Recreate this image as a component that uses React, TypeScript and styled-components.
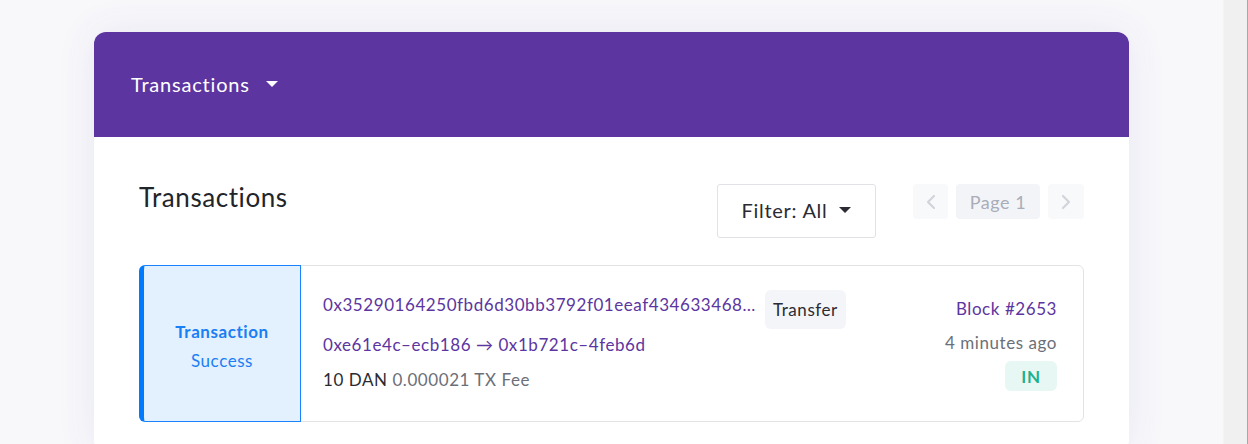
import React from "react";
import styled, { createGlobalStyle } from "styled-components";

const Global = createGlobalStyle`
  html, body { margin: 0; padding: 0; height: 100%; }
  body {
    background: #f8f8fb;
    font-family: "Lato", "Noto Sans", sans-serif;
    letter-spacing: 0.035em;
    overflow: hidden;
  }
  #root { height: 444px; }
`;

const Page = styled.div`
  display: flex;
  height: 444px;
  width: 1248px;
`;

const Main = styled.div`
  flex: 1;
  padding: 32px 0 0 94px;
  background: #f8f8fb;
`;

const ScrollTrack = styled.div`
  background: #f0f0f0;
  border-left: 1px solid #f4f4f6;
  border-right: 1px solid #a8a8a8;
  box-sizing: border-box;
  width: 25px;
`;

const Card = styled.div`
  width: 1035px;
  border-radius: 12px;
  background: #fff;
  box-shadow: 0 0 40px rgba(70, 50, 150, 0.09);
  height: 420px;
`;

const Header = styled.div`
  height: 105px;
  background: #5c35a0;
  border-radius: 12px 12px 0 0;
  display: flex;
  align-items: center;
  padding-left: 37px;
  padding-bottom: 2px;
  box-sizing: border-box;
  gap: 16px;
  color: #fff;
  font-size: 20px;
  letter-spacing: 0.04em;
`;

const Caret = styled.span<{ $color: string }>`
  width: 0;
  height: 0;
  border-left: 6px solid transparent;
  border-right: 6px solid transparent;
  border-top: 6px solid ${(p) => p.$color};
  display: inline-block;
`;

const Body = styled.div`
  padding: 45px 45px 0 45px;
`;

const TopRow = styled.div`
  display: flex;
  align-items: flex-start;
`;

const Title = styled.h2`
  margin: 0;
  font-weight: 400;
  font-size: 26px;
  color: #212529;
  flex: 1;
  line-height: 30px;
`;

const FilterBtn = styled.button`
  height: 54px;
  width: 159px;
  margin-top: 2px;
  background: #fff;
  border: 1px solid #e2e2e6;
  border-radius: 3px;
  display: flex;
  align-items: center;
  justify-content: center;
  gap: 12px;
  font-family: inherit;
  letter-spacing: 0.035em;
  font-size: 20px;
  color: #2b2b33;
  margin-right: 37px;
  padding: 0 0 2px 0;
`;

const Pager = styled.div`
  display: flex;
  gap: 8px;
  margin-top: 2px;
`;

const PageBtn = styled.div<{ $w: number }>`
  width: ${(p) => p.$w}px;
  height: 35px;
  border-radius: 4px;
  background: ${(p) => (p.$w > 40 ? "#f3f4f8" : "#f8f9fb")};
  color: #a9adb8;
  display: flex;
  align-items: center;
  justify-content: center;
  font-size: 18px;
`;

const TxRow = styled.div`
  margin-top: 27px;
  display: flex;
  height: 157px;
  border: 1px solid #e3e3e6;
  border-radius: 6px;
  box-sizing: border-box;
`;

const Status = styled.div`
  width: 162px;
  margin: -1px 0 -1px -1px;
  background: #e3f0fd;
  border: 1px solid #1a82ff;
  border-left: 5px solid #007bff;
  border-radius: 6px 0 0 6px;
  box-sizing: border-box;
  display: flex;
  flex-direction: column;
  align-items: center;
  justify-content: center;
  color: #1a7ef5;
  font-size: 17px;
  line-height: 29px;
  padding-top: 4px;
`;

const StatusTitle = styled.div`
  font-weight: 700;
`;

const Info = styled.div`
  flex: 1;
  padding: 24px 0 0 22px;
  display: flex;
  flex-direction: column;
  min-width: 0;
`;

const HashLine = styled.div`
  display: flex;
  align-items: flex-start;
  gap: 8px;
  height: 39px;
  margin-bottom: -2px;
`;

const Hash = styled.span`
  color: #5c35a0;
  font-size: 17px;
  line-height: 30px;
  max-width: 434px;
  white-space: nowrap;
  overflow: hidden;
  text-overflow: ellipsis;
`;

const Badge = styled.span`
  background: #f4f5f9;
  border-radius: 6px;
  height: 39px;
  padding: 0 8px;
  display: flex;
  align-items: center;
  font-size: 17px;
  color: #2b2b33;
`;

const Line = styled.div`
  font-size: 17px;
  line-height: 35px;
  color: #5c35a0;
`;

const Amount = styled.span`
  color: #2b2b33;
`;

const Muted = styled.span`
  color: #6c6f78;
`;

const Side = styled.div`
  padding: 32px 26px 0 0;
  display: flex;
  flex-direction: column;
  align-items: flex-end;
  font-size: 17px;
`;

const BlockLink = styled.div`
  color: #5c35a0;
  line-height: 22px;
`;

const Time = styled.div`
  color: #6c6f78;
  line-height: 22px;
  margin-top: 12px;
`;

const Dir = styled.div`
  margin-top: 7px;
  width: 52px;
  height: 30px;
  border-radius: 6px;
  background: #e6f7f4;
  color: #1fb08c;
  font-weight: 700;
  display: flex;
  align-items: center;
  justify-content: center;
`;

const Chevron = ({ dir }: { dir: "l" | "r" }) => (
  <svg width="10" height="16" viewBox="0 0 10 16" fill="none">
    <path
      d={dir === "l" ? "M8 2 L2 8 L8 14" : "M2 2 L8 8 L2 14"}
      stroke="#d2d4da"
      strokeWidth="2.2"
      strokeLinecap="round"
      strokeLinejoin="round"
    />
  </svg>
);

export default function App() {
  return (
    <Page>
      <Global />
      <Main>
        <Card>
          <Header>
            <span>Transactions</span>
            <Caret $color="#fff" />
          </Header>
          <Body>
            <TopRow>
              <Title>Transactions</Title>
              <FilterBtn>
                <span>Filter: All</span>
                <Caret $color="#2b2b33" />
              </FilterBtn>
              <Pager>
                <PageBtn $w={35}>
                  <Chevron dir="l" />
                </PageBtn>
                <PageBtn $w={84}>Page 1</PageBtn>
                <PageBtn $w={36}>
                  <Chevron dir="r" />
                </PageBtn>
              </Pager>
            </TopRow>
            <TxRow>
              <Status>
                <StatusTitle>Transaction</StatusTitle>
                <div>Success</div>
              </Status>
              <Info>
                <HashLine>
                  <Hash>0x35290164250fbd6d30bb3792f01eeaf434633468a1c2b9d7e</Hash>
                  <Badge>Transfer</Badge>
                </HashLine>
                <Line>0xe61e4c–ecb186 → 0x1b721c–4feb6d</Line>
                <Line>
                  <Amount>10 DAN</Amount> <Muted>0.000021 TX Fee</Muted>
                </Line>
              </Info>
              <Side>
                <BlockLink>Block #2653</BlockLink>
                <Time>4 minutes ago</Time>
                <Dir>IN</Dir>
              </Side>
            </TxRow>
          </Body>
        </Card>
      </Main>
      <ScrollTrack />
    </Page>
  );
}
